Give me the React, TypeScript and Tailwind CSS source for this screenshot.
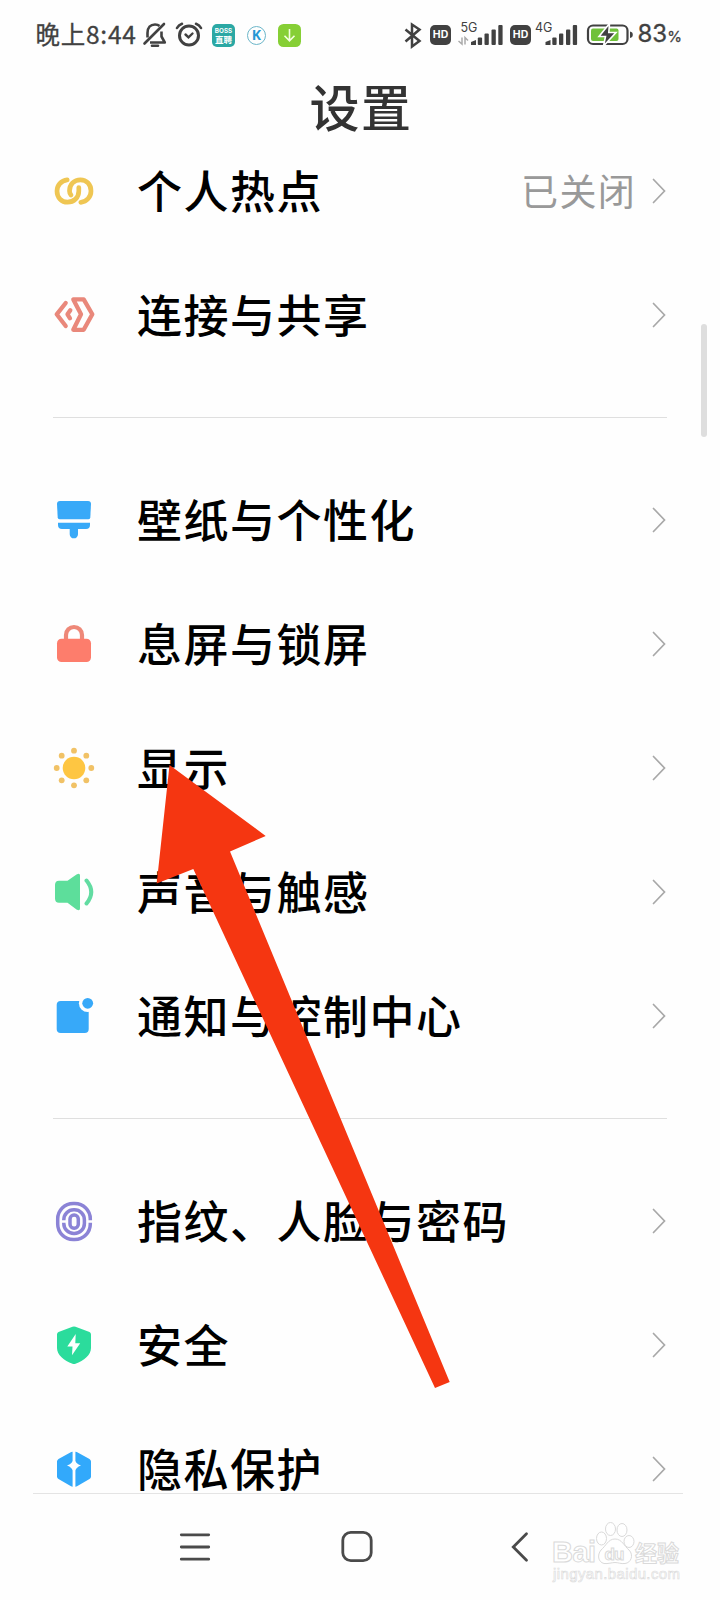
import type { ReactNode } from "react";

const CJK = "font-['Noto_Sans_CJK_SC',sans-serif]";

function RowIcon({ children }: { children: ReactNode }) {
  return (
    <svg viewBox="-24 -24 48 48" className="h-12 w-12 shrink-0" fill="none">
      {children}
    </svg>
  );
}

const icons: Record<string, ReactNode> = {
  hotspot: (
    <g stroke="#efc653" strokeWidth="4.700" strokeLinecap="round">
      <path d="M-6.800-11.100C-13-10.500-17-5.500-17 0C-17 6.500-12.500 11.200-6.500 11.200C0 11.200 4.800 6.500 4.800 0V-3.500" />
      <path d="M6.800 11.300C13 10.700 17 5.700 17 0C17-6.500 12.500-11.200 6.500-11.200C0-11.200-4.500-6.500-4.500 0C-4.500 2-4 3-3 4" />
    </g>
  ),
  share: (
    <g stroke="#e9887b" strokeWidth="4.300" strokeLinecap="round" strokeLinejoin="round">
      <path d="M-8.300-12L-17.300-.7L-8.300 11" />
      <path d="M-3.700-4.800L-6.500-.7L-4 3.300" />
      <path d="M-.7-15.600H9.700L18.300-.7L9.700 14.800H-.7L7-.7Z" />
    </g>
  ),
  brush: (
    <g fill="#38a9f8">
      <path d="M-14-19H14Q17-19 17-16L16.300-2.500Q16.200-.7 14.500-.7H-14.500Q-16.200-.7-16.300-2.500L-17-16Q-17-19-14-19Z" />
      <path d="M-16 2.700H16V5Q16 9 12 9H4V14.200A4.150 4.150 0 0 1-4.300 14.200V9H-12Q-16 9-16 5Z" />
    </g>
  ),
  lock: (
    <>
      <path d="M-8-3V-9A8 8 0 0 1 8-9V-3" stroke="#ee8878" strokeWidth="4.200" />
      <rect x="-17" y="-5.300" width="34" height="23.300" rx="4.500" fill="#fd7d6c" />
    </>
  ),
  sun: (
    <>
      <circle r="11.300" fill="#fec642" />
      <g fill="#f1c266">
        <circle cy="-17.300" r="2.900" />
        <circle cy="17.300" r="2.900" />
        <circle cx="-17.300" r="2.900" />
        <circle cx="17.300" r="2.900" />
        <circle cx="-12.300" cy="-12.300" r="2.900" />
        <circle cx="12.300" cy="-12.300" r="2.900" />
        <circle cx="-12.300" cy="12.300" r="2.900" />
        <circle cx="12.300" cy="12.300" r="2.900" />
      </g>
    </>
  ),
  sound: (
    <>
      <path
        d="M-15-11.300H-6.500L2.500-17.500Q6-19.500 6-16.500V16.500Q6 19.500 2.500 17.500L-6.500 10.700H-15Q-19 10.700-19 6.500V-7Q-19-11.300-15-11.300Z"
        fill="#5dde9b"
      />
      <path d="M12.500-11.500Q22 0 12.500 11.500" stroke="#62dca2" strokeWidth="4" strokeLinecap="round" />
    </>
  ),
  notify: (
    <>
      <rect x="-17.300" y="-15" width="32" height="32" rx="4" fill="#37a9f9" />
      <circle cx="13.700" cy="-12.700" r="8.800" fill="#fefefe" />
      <circle cx="13.700" cy="-12.700" r="5.400" fill="#37a9f9" />
    </>
  ),
  finger: (
    <>
      <g stroke="#8b83d6" strokeWidth="3.500">
        <rect x="-16.300" y="-17.600" width="32.600" height="36.200" rx="15.500" />
        <rect x="-10.200" y="-11.200" width="20.600" height="23.600" rx="10" />
        <rect x="-4" y="-6" width="8.300" height="13.300" rx="4.100" />
      </g>
      <path d="M-13 .5H-8M13 .5H20" stroke="#fefefe" strokeWidth="2.600" />
    </>
  ),
  shield: (
    <>
      <path
        d="M-1.500-18.200Q0-18.900 1.500-18.200L15.500-13Q17-12.300 17-10.500V3C17 10 10 15.500 1.500 18.700Q0 19.200-1.500 18.700C-10 15.500-17 10-17 3V-10.500Q-17-12.300-15.500-13Z"
        fill="#2bdc9c"
      />
      <path d="M1.700-11L-6.700 1.500H-1.500L-2 10.300L6.200-1.700H1.300Z" fill="#fff" />
    </>
  ),
  privacy: (
    <>
      <path
        d="M-2.800-17Q0-18.200 2.800-17L15.500-10Q17-9 17-7.500V7.500Q17 9.200 15.500 10L3 17.300Q0 18.500-3 17.300L-15.500 10Q-17 9.200-17 7.500V-7.500Q-17-9-15.500-10Z"
        fill="#32a9fb"
      />
      <path d="M0-19V19" stroke="#fefefe" strokeWidth="2.800" />
      <path d="M0-10.300Q1.800-5.200 7-3.400Q1.800-1.600 0 3.700Q-1.800-1.600-7-3.400Q-1.800-5.200 0-10.300Z" fill="#fefefe" />
    </>
  ),
};

function Row({ icon, label, value }: { icon: string; label: string; value?: string }) {
  return (
    <div className="flex h-[124px] shrink-0 items-center pl-[50px] pr-[53px]">
      <RowIcon>{icons[icon]}</RowIcon>
      <span className="ml-[39px] flex-1 whitespace-nowrap pb-[3px] text-[45px] font-medium leading-none tracking-[1.500px] text-black">
        {label}
      </span>
      {value && (
        <span className="mr-[15px] pb-[3px] text-[37px] leading-[50px] tracking-[1.300px] text-[#999]">{value}</span>
      )}
      <svg viewBox="0 0 16 28" className="h-7 w-4 shrink-0" fill="none">
        <path d="M2.500 2.500L13.500 14L2.500 25.500" stroke="#a8a8a8" strokeWidth="1.700" strokeLinecap="round" />
      </svg>
    </div>
  );
}

function Divider() {
  return (
    <div className="flex h-[81px] shrink-0 items-center px-[53px]">
      <div className="h-px w-full bg-[#dfdfdf]" />
    </div>
  );
}

function Hd({ className }: { className: string }) {
  return (
    <div
      className={`${className} flex h-5 w-[21px] shrink-0 items-center justify-center rounded-[5px] bg-[#414141] font-['Inter',sans-serif] text-[10.500px] font-bold leading-none text-white`}
    >
      HD
    </div>
  );
}

function Bars() {
  return (
    <g fill="#414141">
      <path d="M0 17L5 15V20H0Z" />
      <rect x="6.800" y="12.500" width="4.300" height="7.500" rx="1" />
      <rect x="13.500" y="8.500" width="4.300" height="11.500" rx="1" />
      <rect x="20.500" y="4.500" width="4.300" height="15.500" rx="1" />
      <rect x="27.300" y="0" width="4.300" height="20" rx="1" />
    </g>
  );
}

function StatusBar() {
  return (
    <div className="flex h-[70px] shrink-0 items-center text-[#414141]">
      <span className="ml-[35.500px] w-[107.500px] whitespace-nowrap pb-[2px] text-[24.500px] leading-[30px] tracking-[0.750px] [-webkit-text-stroke:0.3px_#414141]">
        晚上8:44
      </span>
      <svg viewBox="142 20 26 30" className="-ml-px h-[30px] w-[26px] shrink-0" fill="none" stroke="#414141" strokeWidth="2.600">
        <path d="M144.500 43.500L164 24" strokeLinecap="round" />
        <path d="M147.500 37.500V33C147.500 27.500 150.500 24.500 155 24.500C157 24.500 158.500 25 159.500 26M161.500 31.500V36.500L164.800 42.500H150" strokeLinejoin="round" />
        <path d="M152 45.800H158" strokeLinecap="round" />
      </svg>
      <svg viewBox="174 20 30 30" className="ml-[6px] h-[30px] w-[30px] shrink-0" fill="none" stroke="#414141" strokeLinecap="round">
        <circle cx="189" cy="35.500" r="9.500" strokeWidth="3" />
        <path d="M185.500 34.500L188.500 37.300L192.500 33.500" strokeWidth="2.400" />
        <path d="M177 28Q178.500 25 182 23.800M201 28Q199.500 25 196 23.800" strokeWidth="2.600" />
      </svg>
      <div className="ml-[8px] flex h-[23px] w-[23px] shrink-0 flex-col items-center justify-center rounded-[5px] bg-[#2ba8a4] font-bold text-white">
        <span className="font-['Inter',sans-serif] text-[6.300px] leading-[8px]">BOSS</span>
        <span className="text-[8.500px] leading-[9px]">直聘</span>
      </div>
      <div className="ml-[12px] flex h-[19px] w-[19px] shrink-0 items-center justify-center rounded-full border border-[#6cb6c9] font-['Open_Sans',sans-serif] text-[14px] font-bold leading-none text-[#2797d4]">
        K
      </div>
      <svg viewBox="0 0 23 23" className="ml-[12px] h-[23px] w-[23px] shrink-0" fill="none">
        <rect width="23" height="23" rx="5.500" fill="#86cf35" />
        <path d="M11.500 5V16.500M6.500 11.800L11.500 16.800L16.500 11.800" stroke="#f3ffe0" strokeWidth="1.600" />
      </svg>
      <svg viewBox="403 20 20 28" className="ml-[102px] h-7 w-5 shrink-0" fill="none" stroke="#414141" strokeWidth="2.500">
        <path d="M405.500 28.500L419.500 40L412 45.500V23.500L419.500 28.500L405.500 40.500" />
      </svg>
      <Hd className="ml-[7px]" />
      <svg viewBox="457 20 48 30" className="ml-[6px] h-[30px] w-12 shrink-0">
        <text x="460.500" y="32" fontSize="12.500" fontFamily="Inter, sans-serif" fill="#414141">
          5G
        </text>
        <path d="M458.500 41L462 44V37.500M468 40.500L465 37.500V44.500" stroke="#aaa" strokeWidth="1.500" fill="none" />
        <g transform="translate(471 25)">
          <Bars />
        </g>
      </svg>
      <Hd className="ml-[5px]" />
      <svg viewBox="534 20 46 30" className="ml-[3px] h-[30px] w-[46px] shrink-0">
        <text x="535" y="32" fontSize="12.500" fontFamily="Inter, sans-serif" fill="#414141">
          4G
        </text>
        <g transform="translate(545.500 25)">
          <Bars />
        </g>
      </svg>
      <svg viewBox="586 20 48 30" className="ml-[6px] h-[30px] w-12 shrink-0" fill="none">
        <rect x="588" y="25.500" width="39.500" height="18.500" rx="5" stroke="#414141" strokeWidth="2.200" />
        <rect x="591" y="28.500" width="27.500" height="12.500" rx="2" fill="#70c13a" />
        <path d="M630 31.500Q632.800 32 632.800 34.800T630 38Z" fill="#414141" />
        <path d="M609.500 23.500L599 36.500H605.500L603.500 46L616 32.500H608.800Z" fill="#414141" stroke="#fff" strokeWidth="1.600" />
      </svg>
      <span className="ml-[3.500px] whitespace-nowrap font-['Inter',sans-serif] text-[24px] leading-[30px] [-webkit-text-stroke:0.3px_#414141]">
        83<span className="text-[15px]">%</span>
      </span>
    </div>
  );
}

function Watermark() {
  return (
    <svg
      viewBox="548 1518 140 70"
      className="absolute left-[548px] top-[1518px] h-[70px] w-[140px]"
      fill="#fff"
      stroke="#dadada"
      strokeWidth="1"
    >
      <text x="552" y="1562" fontSize="29" fontWeight="bold" fontFamily="Liberation Sans, sans-serif" textLength="44">
        Bai
      </text>
      <ellipse cx="601.500" cy="1538.500" rx="5" ry="6.500" />
      <ellipse cx="610.500" cy="1529" rx="5" ry="6.500" />
      <ellipse cx="622" cy="1530" rx="5" ry="6.500" />
      <ellipse cx="629" cy="1541.500" rx="5" ry="6" />
      <path d="M615 1539C622 1539 624 1546 629 1550C634 1555 631 1563 625 1563.500C621 1564 618 1562.500 615 1562.500S608 1564 604 1563.500C598 1562 597 1555 601 1550C606 1546 608 1539 615 1539Z" />
      <text x="604.500" y="1560" fontSize="17" fontWeight="bold" fontFamily="Liberation Sans, sans-serif" textLength="20">
        du
      </text>
      <text x="635" y="1560.500" fontSize="22" fontWeight="bold" fontFamily="Noto Sans CJK SC, sans-serif">
        经验
      </text>
      <text x="553" y="1579" fontSize="15" strokeWidth=".6" fontFamily="Liberation Sans, sans-serif" textLength="127">
        jingyan.baidu.com
      </text>
    </svg>
  );
}

export default function App() {
  return (
    <div className={`${CJK} relative flex h-[1600px] w-[720px] flex-col overflow-hidden bg-[#fefefe]`}>
      <StatusBar />
      <h1 className="flex h-[75px] shrink-0 items-center justify-center pb-[5px] pl-[2px] text-[50px] font-medium leading-[70px] tracking-[1.500px] text-[#333]">
        设置
      </h1>
      <main className="-mt-4 flex h-[1364px] shrink-0 flex-col overflow-hidden">
        <Row icon="hotspot" label="个人热点" value="已关闭" />
        <Row icon="share" label="连接与共享" />
        <Divider />
        <Row icon="brush" label="壁纸与个性化" />
        <Row icon="lock" label="息屏与锁屏" />
        <Row icon="sun" label="显示" />
        <Row icon="sound" label="声音与触感" />
        <Row icon="notify" label="通知与控制中心" />
        <Divider />
        <Row icon="finger" label="指纹、人脸与密码" />
        <Row icon="shield" label="安全" />
        <Row icon="privacy" label="隐私保护" />
      </main>
      <nav className="ml-[33px] mr-[37px] flex h-[107px] shrink-0 items-center border-t border-[#e4e4e4]">
        <svg viewBox="0 0 34 34" className="ml-[144.500px] h-[34px] w-[34px]" stroke="#4a4a4a" strokeWidth="2.800" strokeLinecap="round">
          <path d="M3.300 4.800H30.700M3.300 17H30.700M3.300 29.200H30.700" />
        </svg>
        <svg viewBox="0 0 34 34" className="ml-[128.500px] h-[34px] w-[34px]" fill="none" stroke="#4a4a4a" strokeWidth="2.800">
          <rect x="2.800" y="2.300" width="28.400" height="28.400" rx="8" />
        </svg>
        <svg viewBox="0 0 20 34" className="ml-[135.500px] h-[34px] w-5" fill="none" stroke="#4a4a4a" strokeWidth="2.800" strokeLinecap="round">
          <path d="M16.500 3.800L3.300 17L16.500 30.200" />
        </svg>
      </nav>
      <div className="absolute left-[701px] top-[324px] h-[113px] w-[6px] rounded-full bg-[#dedede]" />
      <svg viewBox="150 760 310 640" className="absolute left-[150px] top-[760px] h-[640px] w-[310px]">
        <path d="M169.500 765L265.700 836L230 851.600L449.700 1382L435 1388L193.300 869L156.700 883.500Z" fill="#f53611" />
      </svg>
      <Watermark />
    </div>
  );
}
